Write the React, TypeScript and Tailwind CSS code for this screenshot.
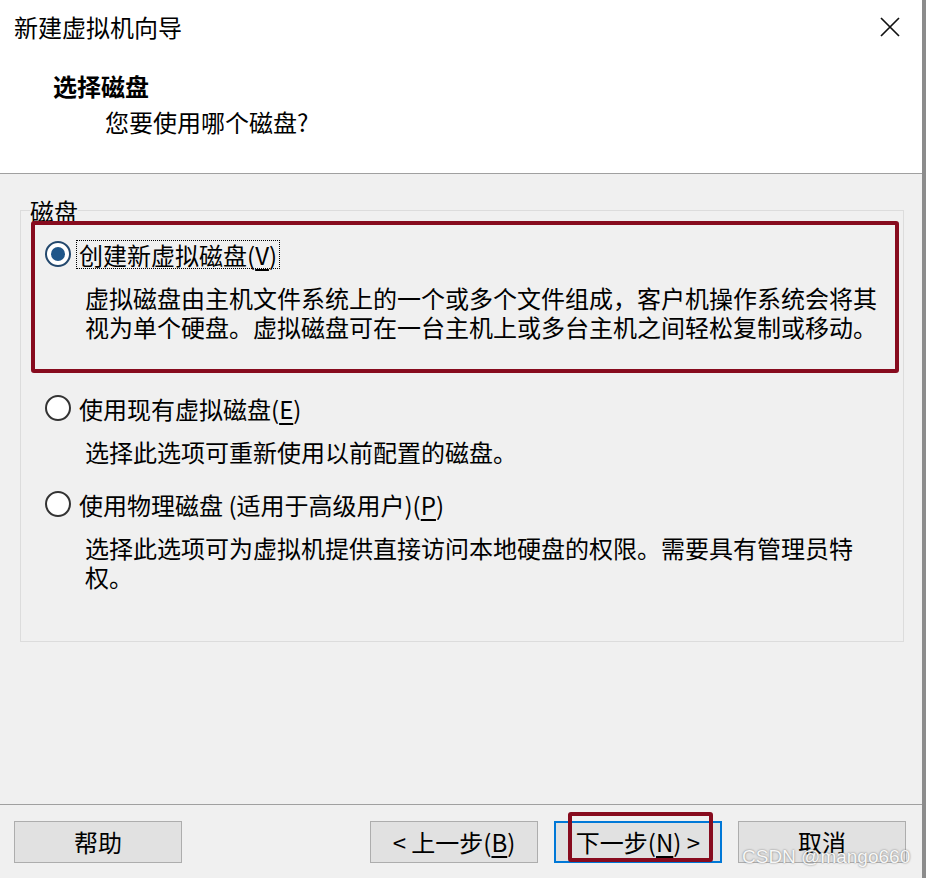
import React from "react";

function Radio({ checked }: { checked?: boolean }) {
  return checked ? (
    <div className="w-[26px] h-[26px] rounded-full border-[2px] border-[#23486d] bg-white flex items-center justify-center shrink-0">
      <div className="w-[14px] h-[14px] rounded-full bg-[#1f5689]" />
    </div>
  ) : (
    <div className="w-[26px] h-[26px] rounded-full border-[2px] border-[#333333] bg-white shrink-0" />
  );
}

function U({ children }: { children: React.ReactNode }) {
  return <span className="underline underline-offset-[4px] decoration-[1.5px]">{children}</span>;
}

function Line({ children }: { children: React.ReactNode }) {
  return <div className="h-[29px] text-[24px] leading-[29px] whitespace-nowrap">{children}</div>;
}

export default function App() {
  return (
    <div className="relative w-[926px] h-[878px] overflow-hidden flex bg-[#f0f0f0] text-black font-['Noto_Sans_CJK_SC','Noto_Sans',sans-serif]">
      <div className="w-[922px] flex flex-col">
        {/* Header */}
        <div className="h-[174px] bg-white border-b border-[#a0a0a0] box-border">
          <div className="flex items-center justify-between pl-[14px] pr-[22px] pt-[11px]">
            <span className="text-[24px] leading-[32px]">新建虚拟机向导</span>
            <svg width="20" height="20" viewBox="0 0 20 20" className="mt-[-1px]">
              <path d="M1 1 L19 19 M19 1 L1 19" stroke="#111" strokeWidth="1.7" fill="none" />
            </svg>
          </div>
          <div className="mt-[27px] pl-[53px] text-[24px] leading-[32px] font-bold">选择磁盘</div>
          <div className="mt-[4px] pl-[105px] text-[24px] leading-[32px]">您要使用哪个磁盘?</div>
        </div>

        {/* Body */}
        <div className="h-[630px] pt-[36px] pl-[20px]">
          <div className="relative w-[884px] h-[432px] border border-[#dcdcdc] pt-[28px] pl-[24px]">
            <span className="absolute left-[9px] top-[-12px] bg-[#f0f0f0] text-[24px] leading-[24px]">磁盘</span>

            {/* Option 1 */}
            <div className="flex items-center h-[30px]">
              <Radio checked />
              <span className="ml-[5px] h-[29px] px-[2px] border border-dotted border-black flex items-center text-[24px] leading-[27px] whitespace-nowrap">
                创建新虚拟磁盘(<U>V</U>)
              </span>
            </div>
            <div className="mt-[14px] ml-[40px]">
              <Line>虚拟磁盘由主机文件系统上的一个或多个文件组成，客户机操作系统会将其</Line>
              <Line>视为单个硬盘。虚拟磁盘可在一台主机上或多台主机之间轻松复制或移动。</Line>
            </div>

            {/* Option 2 */}
            <div className="mt-[52px] flex items-center h-[30px]">
              <Radio />
              <span className="ml-[5px] h-[29px] px-[2px] border border-transparent flex items-center text-[24px] leading-[27px] whitespace-nowrap">
                使用现有虚拟磁盘(<U>E</U>)
              </span>
            </div>
            <div className="mt-[14px] ml-[40px]">
              <Line>选择此选项可重新使用以前配置的磁盘。</Line>
            </div>

            {/* Option 3 */}
            <div className="mt-[23px] flex items-center h-[30px]">
              <Radio />
              <span className="ml-[5px] h-[29px] px-[2px] border border-transparent flex items-center text-[24px] leading-[27px] whitespace-nowrap">
                使用物理磁盘 (适用于高级用户)(<U>P</U>)
              </span>
            </div>
            <div className="mt-[14px] ml-[40px]">
              <Line>选择此选项可为虚拟机提供直接访问本地硬盘的权限。需要具有管理员特</Line>
              <Line>权。</Line>
            </div>

            {/* red annotation */}
            <div className="absolute left-[10px] top-[10px] w-[868px] h-[152px] border-[4px] border-[#870b1e] rounded-[3px] pointer-events-none" />
          </div>
        </div>

        {/* Footer */}
        <div className="h-[74px] border-t border-[#a0a0a0] flex items-start pt-[16px] pl-[14px] pr-[16px]">
          <button className="w-[168px] h-[42px] bg-[#e1e1e1] border border-[#adadad] text-[24px] leading-[30px] flex items-center justify-center">
            帮助
          </button>
          <div className="ml-auto flex gap-[16px]">
            <button className="w-[168px] h-[42px] bg-[#e1e1e1] border border-[#adadad] text-[24px] leading-[30px] flex items-center justify-center whitespace-nowrap">
              &lt; 上一步(<U>B</U>)
            </button>
            <button className="w-[168px] h-[42px] bg-[#e1e1e1] border-[2px] border-[#0078d7] text-[24px] leading-[30px] flex items-center justify-center whitespace-nowrap">
              下一步(<U>N</U>) &gt;
            </button>
            <button className="w-[168px] h-[42px] bg-[#e1e1e1] border border-[#adadad] text-[24px] leading-[30px] flex items-center justify-center">
              取消
            </button>
          </div>
        </div>
      </div>
      <div className="w-[4px] h-full bg-[#8c8c8c]" />

      {/* red annotation on next button */}
      <div className="absolute left-[568px] top-[812px] w-[145px] h-[50px] border-[4px] border-[#870b1e] rounded-[3px] pointer-events-none" />

      {/* watermark */}
      <div className="absolute left-[742px] top-[845px] text-[19px] leading-[24px] font-['Liberation_Sans',Arial,sans-serif] text-[#f7f7f7] [text-shadow:0_0_2px_#6b6b6b] whitespace-nowrap pointer-events-none">
        CSDN @mango660
      </div>
    </div>
  );
}
